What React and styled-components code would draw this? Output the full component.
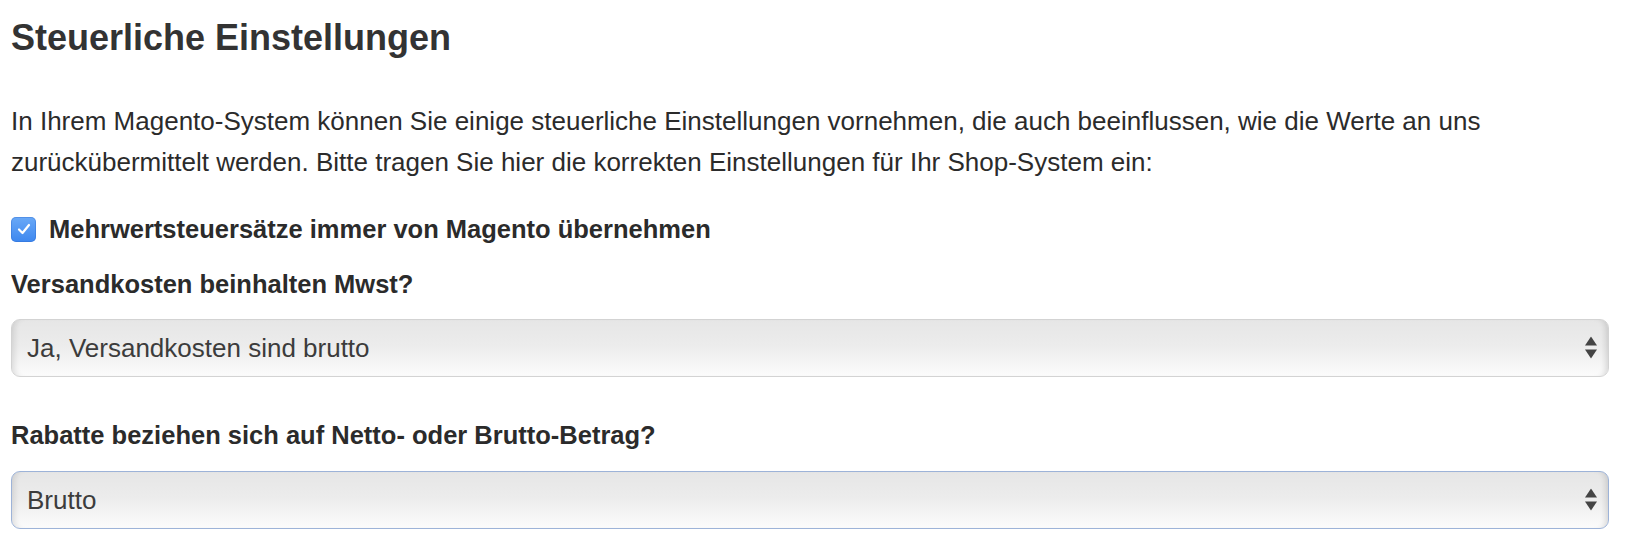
import React, { useState } from "react";
import styled, { createGlobalStyle } from "styled-components";

const GlobalStyle = createGlobalStyle`
  body {
    margin: 0;
    background: #fff;
    font-family: "Liberation Sans", Arial, sans-serif;
    color: #333;
  }
`;

const Page = styled.div`
  padding: 16px 29px 0 11px;
`;

const Title = styled.h2`
  margin: 0;
  font-size: 36px;
  line-height: 44px;
  font-weight: 700;
  color: #333;
`;

const Intro = styled.p`
  margin: 41px 0 0;
  font-size: 26px;
  line-height: 41px;
  color: #2b2b2b;
`;

const CheckRow = styled.label`
  display: flex;
  align-items: center;
  gap: 13px;
  margin-top: 31px;
  font-size: 25.5px;
  line-height: 30px;
  font-weight: 700;
  color: #2b2b2b;
  cursor: pointer;
`;

const Box = styled.span`
  flex: 0 0 25px;
  height: 25px;
  border-radius: 5px;
  background: linear-gradient(#6aa9f7, #3d87ef);
  box-shadow: inset 0 0 0 1px rgba(40, 100, 200, 0.35);
  display: flex;
  align-items: center;
  justify-content: center;
`;

const Group = styled.div`
  margin-top: ${(p) => p.$top}px;
`;

const Label = styled.label`
  display: block;
  font-size: 25.5px;
  line-height: 30px;
  font-weight: 700;
  color: #2b2b2b;
`;

const SelectWrap = styled.div`
  position: relative;
  margin-top: ${(p) => p.$top}px;
`;

const Select = styled.select`
  appearance: none;
  -webkit-appearance: none;
  display: block;
  width: 100%;
  height: 58px;
  padding: 0 40px 0 15px;
  font-family: "Liberation Sans", Arial, sans-serif;
  font-size: 26px;
  color: #3c3c3c;
  border: 1.5px solid ${(p) => (p.$focused ? "#9db3d8" : "#d3d3d3")};
  border-radius: 9px;
  background: linear-gradient(#e6e6e6 0%, #ececec 45%, #fbfbfb 100%);
  box-shadow: inset 7px 0 6px -5px rgba(0, 0, 0, 0.12),
    inset -7px 0 6px -5px rgba(0, 0, 0, 0.14);
  outline: none;
`;

const Arrows = styled.svg`
  position: absolute;
  right: 12px;
  top: 50%;
  transform: translateY(-50%);
  pointer-events: none;
`;

function SelectField({ label, value, options, focused, labelTop, selectTop }) {
  const [val, setVal] = useState(value);
  return (
    <Group $top={labelTop}>
      <Label>{label}</Label>
      <SelectWrap $top={selectTop}>
        <Select $focused={focused} value={val} onChange={(e) => setVal(e.target.value)}>
          {options.map((o) => (
            <option key={o}>{o}</option>
          ))}
        </Select>
        <Arrows width="12" height="23" viewBox="0 0 12 23">
          <path d="M6 0 L12 9 L0 9 Z" fill="#444" />
          <path d="M0 13 L12 13 L6 22 Z" fill="#444" />
        </Arrows>
      </SelectWrap>
    </Group>
  );
}

export default function App() {
  return (
    <>
      <GlobalStyle />
      <Page>
        <Title>Steuerliche Einstellungen</Title>
        <Intro>
          In Ihrem Magento-System können Sie einige steuerliche Einstellungen vornehmen, die auch
          beeinflussen, wie die Werte an uns zurückübermittelt werden. Bitte tragen Sie hier die
          korrekten Einstellungen für Ihr Shop-System ein:
        </Intro>
        <CheckRow>
          <Box>
            <svg width="14" height="12" viewBox="0 0 14 12">
              <path d="M2 6.5 L5.5 10 L12 2" fill="none" stroke="#fff" strokeWidth="2.2" strokeLinecap="round" strokeLinejoin="round" />
            </svg>
          </Box>
          Mehrwertsteuersätze immer von Magento übernehmen
        </CheckRow>
        <SelectField
          label="Versandkosten beinhalten Mwst?"
          value="Ja, Versandkosten sind brutto"
          options={["Ja, Versandkosten sind brutto", "Nein, Versandkosten sind netto"]}
          labelTop={25}
          selectTop={20}
        />
        <SelectField
          label="Rabatte beziehen sich auf Netto- oder Brutto-Betrag?"
          value="Brutto"
          options={["Brutto", "Netto"]}
          focused
          labelTop={43}
          selectTop={21}
        />
      </Page>
    </>
  );
}
